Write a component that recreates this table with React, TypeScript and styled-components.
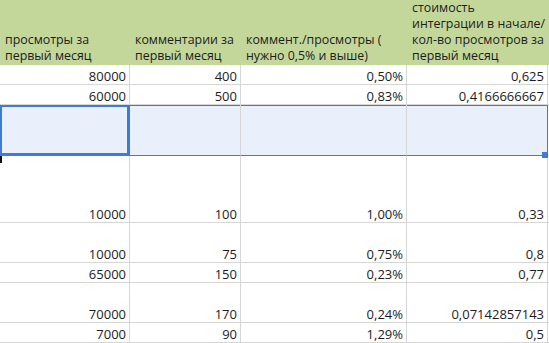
import React from 'react';
import styled, { createGlobalStyle, css } from 'styled-components';

const GlobalStyle = createGlobalStyle`
  html, body {
    margin: 0;
    padding: 0;
    background: #ffffff;
  }
  body {
    font-family: "Open Sans", "Noto Sans", "DejaVu Sans", sans-serif;
    overflow: hidden;
  }
`;

const SELECT_BLUE = '#3f7ad8';
const GRID = '#d6d6d6';

const Sheet = styled.div`
  display: grid;
  grid-template-columns: 130px 111px 166px 141px 1fr;
  width: 549px;
  height: 343px;
  overflow: hidden;
  color: #1c1c1c;
`;

const HeaderCell = styled.div`
  height: 65px;
  box-sizing: border-box;
  padding: 0 2px 1px 5px;
  background: #c4d79b;
  display: flex;
  flex-direction: column;
  justify-content: flex-end;
  font-size: 12.4px;
  line-height: 16px;
  white-space: nowrap;
  overflow: hidden;
`;

const Cell = styled.div<{ $h: number; $selected?: boolean; $active?: boolean; $edge?: boolean }>`
  position: relative;
  height: ${(p) => p.$h}px;
  box-sizing: border-box;
  border-right: 1px solid ${GRID};
  border-bottom: 1px solid ${GRID};
  padding: 0 3px 0 4px;
  display: flex;
  align-items: flex-end;
  justify-content: flex-end;
  font-size: 13px;
  line-height: 15px;
  white-space: nowrap;

  ${(p) =>
    p.$selected &&
    css`
      background: #e9f0fb;
      border-bottom-color: ${SELECT_BLUE};
      box-shadow: inset 0 1px 0 ${SELECT_BLUE};
    `}

  ${(p) =>
    p.$active &&
    css`
      background: #e9f0fb;
      border-right-color: ${SELECT_BLUE};
      box-shadow: inset 0 0 0 2px ${SELECT_BLUE};
    `}

  ${(p) =>
    p.$edge &&
    css`
      border-right-color: ${SELECT_BLUE};
    `}
`;

const FillHandle = styled.span`
  position: absolute;
  right: -1px;
  bottom: -3px;
  width: 6px;
  height: 6px;
  background: ${SELECT_BLUE};
  z-index: 2;
`;

const RowMark = styled.span`
  position: absolute;
  left: 0;
  top: 0;
  width: 2px;
  height: 7px;
  background: #111;
`;

type Row = { h: number; cells: string[]; selected?: boolean };

const headers: string[][] = [
  ['просмотры за', 'первый месяц'],
  ['комментарии за', 'первый месяц'],
  ['коммент./просмотры (', 'нужно 0,5% и выше)'],
  ['стоимость', 'интеграции в начале/', 'кол-во просмотров за', 'первый месяц'],
];

const rows: Row[] = [
  { h: 20, cells: ['80000', '400', '0,50%', '0,625'] },
  { h: 20, cells: ['60000', '500', '0,83%', '0,4166666667'] },
  { h: 51, cells: ['', '', '', ''], selected: true },
  { h: 67, cells: ['10000', '100', '1,00%', '0,33'] },
  { h: 40, cells: ['10000', '75', '0,75%', '0,8'] },
  { h: 20, cells: ['65000', '150', '0,23%', '0,77'] },
  { h: 40, cells: ['70000', '170', '0,24%', '0,07142857143'] },
  { h: 20, cells: ['7000', '90', '1,29%', '0,5'] },
];

export default function App() {
  return (
    <>
      <GlobalStyle />
      <Sheet>
        {headers.map((lines, i) => (
          <HeaderCell key={`h${i}`}>
            {lines.map((l) => (
              <div key={l}>{l}</div>
            ))}
          </HeaderCell>
        ))}
        <HeaderCell />

        {rows.map((row, r) => (
          <React.Fragment key={r}>
            {row.cells.map((value, c) => (
              <Cell
                key={c}
                $h={row.h}
                $selected={row.selected}
                $active={row.selected && c === 0}
                $edge={row.selected && c === 3}
              >
                {value}
                {row.selected && c === 3 && <FillHandle />}
                {r === 3 && c === 0 && <RowMark />}
              </Cell>
            ))}
            <Cell $h={row.h} />
          </React.Fragment>
        ))}
      </Sheet>
    </>
  );
}
